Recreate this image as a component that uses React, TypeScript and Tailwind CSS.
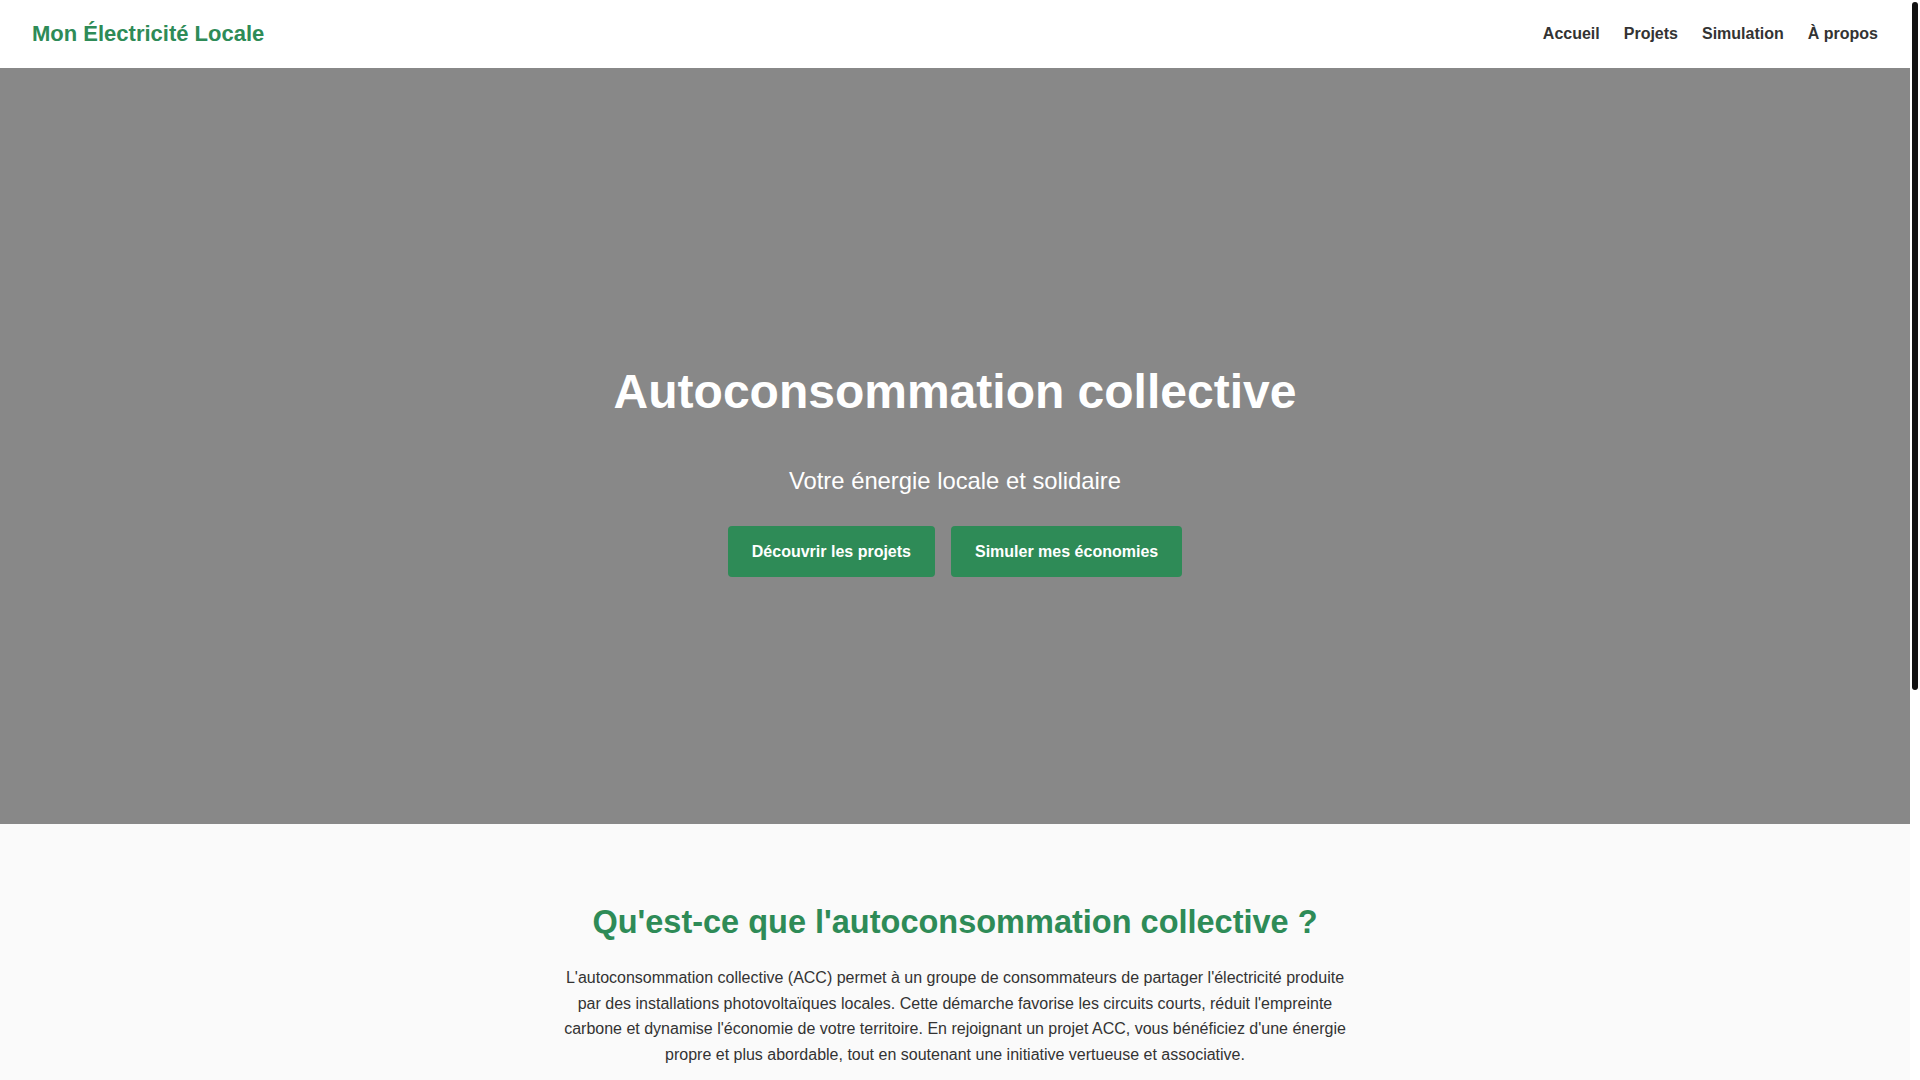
import React from "react";

const links = ["Accueil", "Projets", "Simulation", "À propos"];

const steps = [
  { title: "Production locale", text: "Des panneaux solaires installés sur les toits de votre commune produisent une électricité verte." },
  { title: "Partage de l'énergie", text: "L'électricité produite est répartie entre les participants situés à proximité." },
  { title: "Économies durables", text: "Chaque membre bénéficie d'un tarif stable et maîtrisé sur le long terme." },
];

export default function App() {
  return (
    <div className="flex h-screen bg-white" style={{ fontFamily: '"Liberation Sans", Arial, sans-serif' }}>
      <div className="flex-1 min-w-0 overflow-y-auto text-[#333] [scrollbar-width:none]">
        {/* Header */}
        <header className="flex items-center justify-between h-[68px] px-8 bg-white">
          <a className="text-[22px] font-bold text-[#2e8b57] leading-none">Mon Électricité Locale</a>
          <nav className="flex items-center gap-6">
            {links.map((l) => (
              <a key={l} className="text-base font-bold text-[#333] leading-none">{l}</a>
            ))}
          </nav>
        </header>

        {/* Hero */}
        <section className="flex flex-col items-center justify-center h-[756px] pt-12 bg-[#888888] text-white text-center">
          <h1 className="text-5xl font-bold leading-[58px] mb-[42px]">Autoconsommation collective</h1>
          <p className="text-[23.8px] leading-[36px] mb-[27px]">Votre énergie locale et solidaire</p>
          <div className="flex gap-4">
            <button className="h-[51px] px-6 rounded bg-[#2e8b57] text-base font-bold text-white">Découvrir les projets</button>
            <button className="h-[51px] px-6 rounded bg-[#2e8b57] text-base font-bold text-white">Simuler mes économies</button>
          </div>
        </section>

        {/* What is ACC */}
        <section className="flex flex-col items-center pt-[79px] pb-20 bg-[#fafafa] text-center">
          <h2 className="text-[32.5px] font-bold leading-[38px] text-[#2e8b57] mb-6">Qu'est-ce que l'autoconsommation collective ?</h2>
          <p className="max-w-[800px] text-base leading-[1.6] text-[#333]">
            L'autoconsommation collective (ACC) permet à un groupe de consommateurs de partager l'électricité produite par des installations photovoltaïques locales. Cette démarche favorise les circuits courts, réduit l'empreinte carbone et dynamise l'économie de votre territoire. En rejoignant un projet ACC, vous bénéficiez d'une énergie propre et plus abordable, tout en soutenant une initiative vertueuse et associative.
          </p>
        </section>

        {/* How it works */}
        <section className="flex flex-col items-center py-20 bg-white text-center">
          <h2 className="text-[32px] font-bold leading-[38px] text-[#2e8b57] mb-10">Comment ça marche ?</h2>
          <div className="grid grid-cols-3 gap-8 max-w-[1100px]">
            {steps.map((s) => (
              <div key={s.title} className="p-8 rounded-lg bg-[#fafafa] shadow">
                <h3 className="text-xl font-bold text-[#2e8b57] mb-3">{s.title}</h3>
                <p className="text-base leading-[1.6]">{s.text}</p>
              </div>
            ))}
          </div>
        </section>

        <footer className="py-8 bg-[#333] text-center text-sm text-white">© 2024 Mon Électricité Locale</footer>
      </div>

      {/* scrollbar */}
      <div className="w-[10px] shrink-0 bg-white pt-[2px] px-[2px]">
        <div className="h-[688px] rounded-[3px] bg-[#111]" />
      </div>
    </div>
  );
}
